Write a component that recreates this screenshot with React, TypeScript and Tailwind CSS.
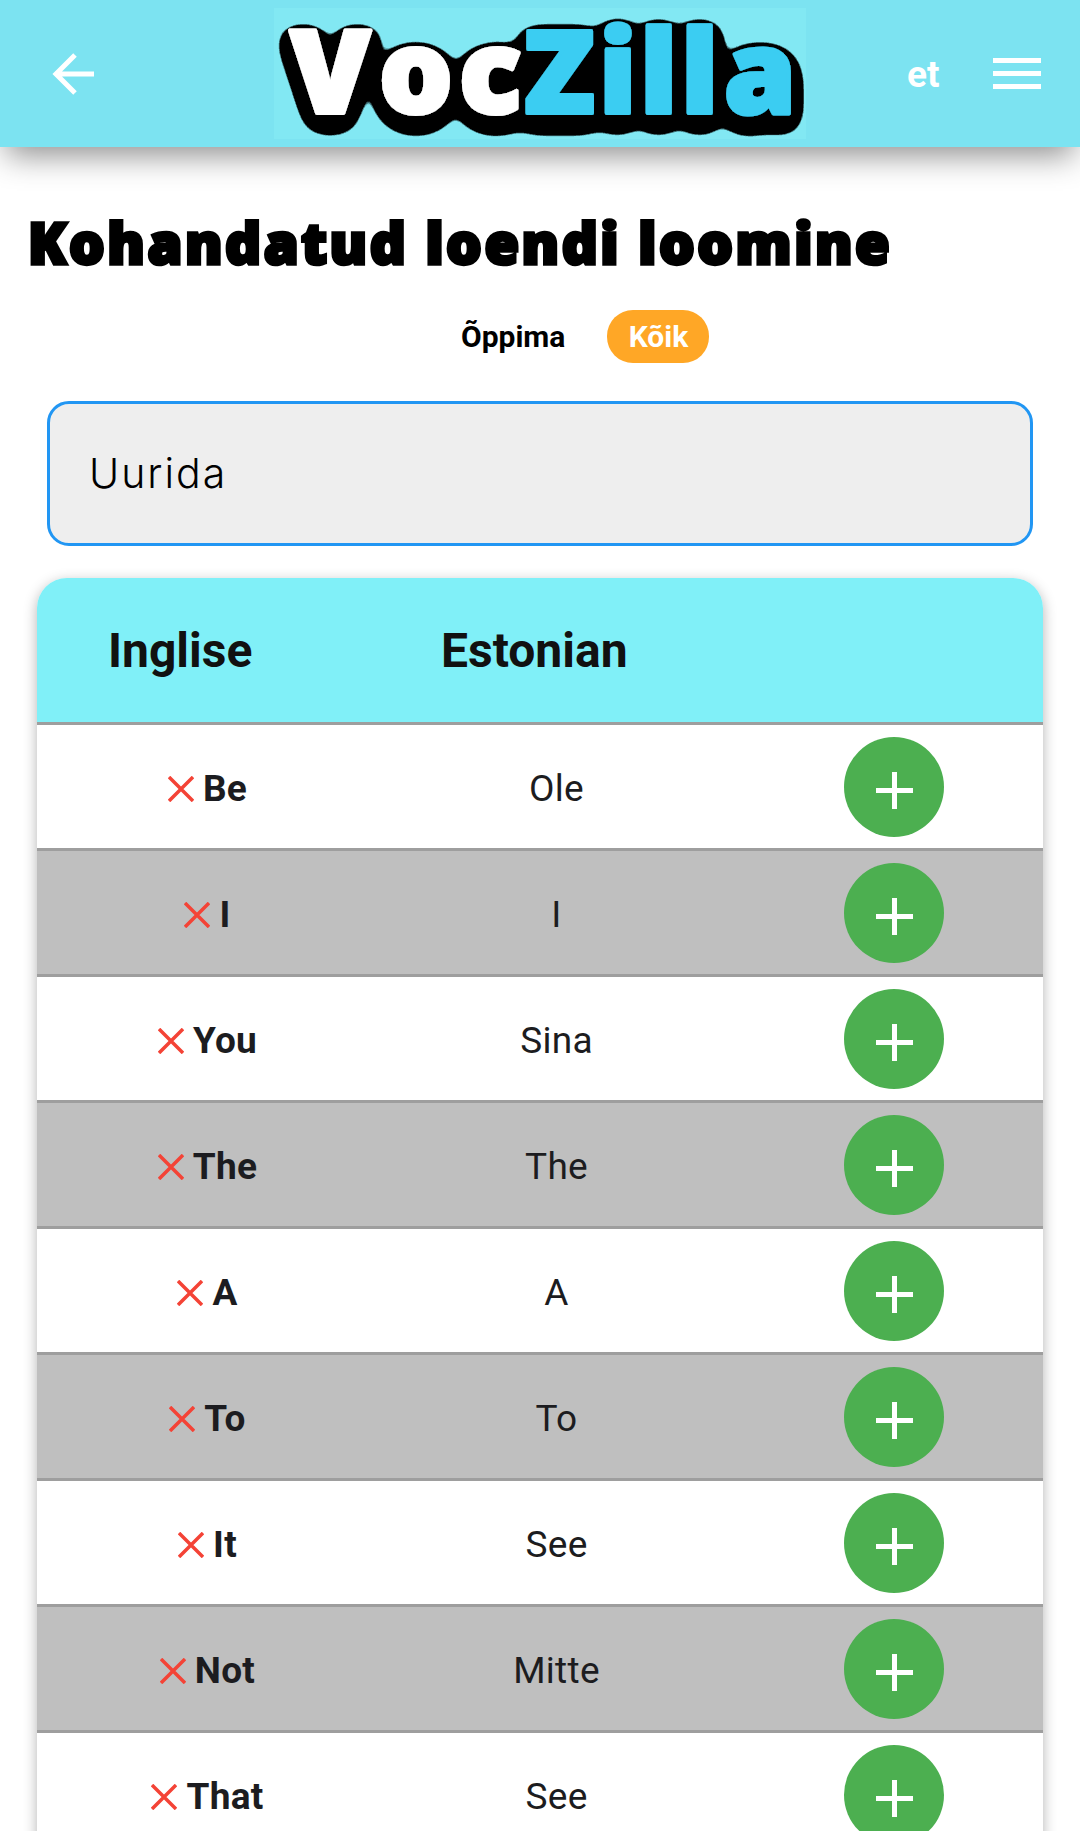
const rows = [
  { en: 'Be', et: 'Ole' },
  { en: 'I', et: 'I' },
  { en: 'You', et: 'Sina' },
  { en: 'The', et: 'The' },
  { en: 'A', et: 'A' },
  { en: 'To', et: 'To' },
  { en: 'It', et: 'See' },
  { en: 'Not', et: 'Mitte' },
  { en: 'That', et: 'See' },
]

function Logo() {
  const font = { fontFamily: '"Open Sans", sans-serif', fontWeight: 800, fontSize: 116 }
  return (
    <svg width="532" height="131" viewBox="0 0 532 131" className="overflow-visible bg-[#82e8f3]">
      <defs>
        {/* thick rounded black outline, pushed down a bit */}
        <filter id="outline" filterUnits="userSpaceOnUse" x="0" y="0" width="532" height="131">
          <feGaussianBlur in="SourceAlpha" stdDeviation="10" />
          <feComponentTransfer>
            <feFuncA type="linear" slope="40" intercept="-3.2" />
          </feComponentTransfer>
          <feOffset dy="8" result="edge" />
          <feMerge>
            <feMergeNode in="edge" />
            <feMergeNode in="SourceGraphic" />
          </feMerge>
        </filter>
      </defs>
      <g filter="url(#outline)" strokeWidth="4" strokeLinejoin="round" style={font}>
        <text x="16 105 185" y="105" fill="#fff" stroke="#fff">Voc</text>
        <text x="250 325 366 407 450" y="105" fill="#3bcdf2" stroke="#3bcdf2">Zilla</text>
      </g>
    </svg>
  )
}

function Row({ en, et, index }: { en: string; et: string; index: number }) {
  return (
    <div
      className={`grid h-[126px] shrink-0 grid-cols-[341px_357px_1fr] items-center border-b-[3px] border-[#9e9e9e] pt-[5px] text-[37px] tracking-[0.3px] text-[#1c1c20] ${
        index % 2 === 0 ? 'bg-white' : 'bg-[#bfbfbf]'
      }`}
    >
      <div className="flex items-center justify-center gap-[9px]">
        <svg width="26" height="26" viewBox="0 0 26 26" className="shrink-0">
          <path d="M1 1 25 25M25 1 1 25" stroke="#f44336" strokeWidth="3.5" fill="none" />
        </svg>
        <span className="font-bold">{en}</span>
      </div>
      <div className="text-center">{et}</div>
      <div className="-mt-[4px] flex justify-center pl-[10px]">
        <div className="flex size-[100px] items-center justify-center rounded-full bg-[#4caf50] pt-[6px]">
          <svg width="37" height="37" viewBox="0 0 37 37">
            <path d="M18.5 0v37M0 18.5h37" stroke="#fff" strokeWidth="5" fill="none" />
          </svg>
        </div>
      </div>
    </div>
  )
}

export default function App() {
  return (
    <div className="h-[1831px] overflow-hidden bg-white font-['Roboto',sans-serif]">
      {/* header */}
      <header className="flex h-[147px] items-center bg-[#7ce3f1] shadow-[0_14px_30px_-6px_rgba(0,0,0,0.45)]">
        <svg width="42" height="42" viewBox="0 0 42 42" className="ml-[52px] shrink-0">
          <path d="M42 21H4M23 2 4 21l19 19" stroke="#fff" strokeWidth="5" fill="none" />
        </svg>
        <div className="ml-[180px] shrink-0">
          <Logo />
        </div>
        <span className="ml-[101px] pt-[2px] text-[37px] font-bold text-white">et</span>
        <div className="mr-[39px] ml-auto flex w-[48px] flex-col gap-[8px]">
          <div className="h-[5px] bg-white" />
          <div className="h-[5px] bg-white" />
          <div className="h-[5px] bg-white" />
        </div>
      </header>

      <h1 className="mt-[63px] ml-[28px] text-[56px] leading-[64px] font-extrabold tracking-[2.6px] text-black font-['Open_Sans',sans-serif] [-webkit-text-stroke:3.5px_black]">
        Kohandatud loendi loomine
      </h1>

      {/* filters */}
      <div className="mt-[36px] ml-[461px] flex items-center gap-[42px]">
        <span className="text-[30px] font-bold text-black">Õppima</span>
        <span className="flex h-[53px] w-[102px] items-center justify-center rounded-[26px] bg-[#ffa726] text-[30px] font-bold text-white">
          Kõik
        </span>
      </div>

      {/* search */}
      <div className="mx-[47px] mt-[38px] flex h-[145px] items-center rounded-[22px] border-[3px] border-[#2196f3] bg-[#eeeeee] pl-[39px] text-[41px] tracking-[2px] text-black font-['Inter',sans-serif] font-light">
        Uurida
      </div>

      {/* table */}
      <div className="mx-[37px] mt-[32px] flex flex-col overflow-hidden rounded-t-[30px] shadow-[0_4px_14px_rgba(0,0,0,0.3)]">
        <div className="flex h-[147px] shrink-0 items-center border-b-[3px] border-[#9e9e9e] bg-[#80f0f8] pt-[2px] text-[48px] font-bold text-[#111]">
          <span className="ml-[71px] w-[333px]">Inglise</span>
          <span>Estonian</span>
        </div>
        {rows.map((row, i) => (
          <Row key={row.en} en={row.en} et={row.et} index={i} />
        ))}
      </div>
    </div>
  )
}
